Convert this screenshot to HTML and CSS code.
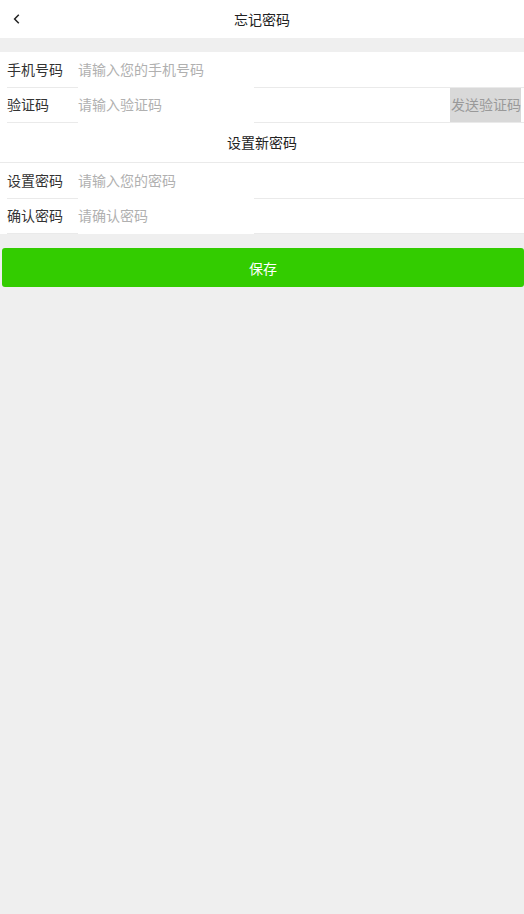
FILE: index.html
```html
<!DOCTYPE html>
<html lang="zh-CN">
<head>
<meta charset="utf-8">
<title>忘记密码</title>
<link rel="stylesheet" href="styles.css">
</head>
<body>
<header class="topbar">
  <svg class="back" width="10" height="12" viewBox="0 0 10 12"><polyline points="6.8,1.8 2.6,6 6.8,10.2" fill="none" stroke="#222" stroke-width="1.5"/></svg>
  <span class="title">忘记密码</span>
</header>
<div class="band"></div>
<section class="form">
  <div class="row tall">
    <span class="pad"></span>
    <span class="label">手机号码</span>
    <span class="mid"><span class="ph">请输入您的手机号码</span></span>
    <span class="right"></span>
  </div>
  <div class="row">
    <span class="pad"></span>
    <span class="label">验证码</span>
    <span class="mid"><span class="ph">请输入验证码</span></span>
    <span class="right"><span class="send">发送验证码</span></span>
  </div>
  <div class="subtitle">设置新密码</div>
  <div class="row tall">
    <span class="pad"></span>
    <span class="label">设置密码</span>
    <span class="mid"><span class="ph">请输入您的密码</span></span>
    <span class="right"></span>
  </div>
  <div class="row">
    <span class="pad"></span>
    <span class="label">确认密码</span>
    <span class="mid"><span class="ph">请确认密码</span></span>
    <span class="right"></span>
  </div>
</section>
<div class="actions">
  <button class="save">保存</button>
</div>
</body>
</html>
```
FILE: styles.css
```css
html, body {
  margin: 0;
  padding: 0;
  background: #efefef;
  font-family: "Noto Sans CJK SC", "Noto Sans", sans-serif;
  font-size: 14px;
  color: #333;
}
.topbar {
  height: 38px;
  background: #fff;
  display: flex;
  align-items: center;
  justify-content: center;
  position: relative;
}
.back {
  position: absolute;
  left: 12px;
  top: 13px;
}
.title {
  color: #222;
  font-size: 14px;
}
.band {
  height: 14px;
}
.form {
  background: #fff;
}
.row {
  display: flex;
  height: 35px;
}
.row.tall {
  height: 36px;
}
.pad {
  width: 7px;
}
.label {
  width: 71px;
  border-bottom: 1px solid #eaeaea;
  display: flex;
  align-items: center;
  padding-bottom: 2px;
  box-sizing: border-box;
  color: #333;
  white-space: nowrap;
}
.mid {
  width: 176px;
  display: flex;
  align-items: center;
  padding-bottom: 3px;
}
.ph {
  color: #b0b0b0;
  white-space: nowrap;
}
.right {
  flex: 1;
  border-bottom: 1px solid #eaeaea;
  display: flex;
  justify-content: flex-end;
  padding-right: 3px;
}
.send {
  width: 71px;
  background: #d9d9d9;
  color: #999;
  display: flex;
  align-items: center;
  justify-content: flex-end;
  padding-bottom: 2px;
  box-sizing: border-box;
  white-space: nowrap;
  overflow: hidden;
}
.subtitle {
  height: 39px;
  border-bottom: 1px solid #eaeaea;
  display: flex;
  align-items: center;
  justify-content: center;
  padding-bottom: 2px;
  box-sizing: border-box;
  height: 40px;
  color: #222;
}
.actions {
  padding: 14px 0 0 2px;
}
.save {
  display: block;
  width: 100%;
  height: 39px;
  border: none;
  border-radius: 3px;
  background: #33cc00;
  color: #fff;
  font-family: "Noto Sans CJK SC", "Noto Sans", sans-serif;
  font-size: 14px;
}
```
